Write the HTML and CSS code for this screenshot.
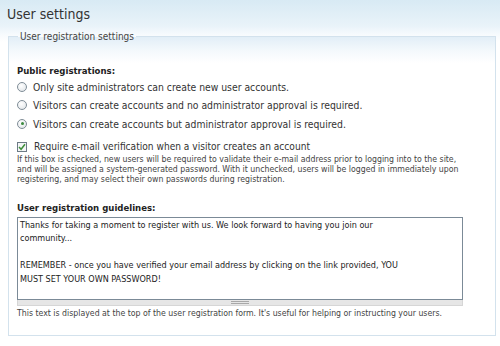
FILE: index.html
```html
<!DOCTYPE html>
<html>
<head>
<meta charset="utf-8">
<link rel="stylesheet" href="styles.css">
</head>
<body>
<div class="page">
  <h1 class="title">User settings</h1>
  <fieldset class="box">
    <legend class="legend">User registration settings</legend>
    <div class="item">
      <div class="label">Public registrations:</div>
      <div class="opt"><span class="radio"></span><span>Only site administrators can create new user accounts.</span></div>
      <div class="opt"><span class="radio"></span><span>Visitors can create accounts and no administrator approval is required.</span></div>
      <div class="opt"><span class="radio on"></span><span>Visitors can create accounts but administrator approval is required.</span></div>
    </div>
    <div class="item check">
      <div class="opt"><span class="checkbox"><svg width="8" height="8" viewBox="0 0 8 8"><path d="M1 4 L3.1 6.3 L7 1.3" fill="none" stroke="#3f8f3a" stroke-width="1.5"/></svg></span><span>Require e-mail verification when a visitor creates an account</span></div>
      <div class="desc">If this box is checked, new users will be required to validate their e-mail address prior to logging into to the site, and will be assigned a system-generated password. With it unchecked, users will be logged in immediately upon registering, and may select their own passwords during registration.</div>
    </div>
    <div class="item guide">
      <div class="label">User registration guidelines:</div>
      <div class="textarea">Thanks for taking a moment to register with us. We look forward to having you join our<br>community...<br><br>REMEMBER - once you have verified your email address by clicking on the link provided, YOU<br>MUST SET YOUR OWN PASSWORD!</div>
      <div class="grip"><span class="grip-bar"></span></div>
      <div class="desc help">This text is displayed at the top of the user registration form. It's useful for helping or instructing your users.</div>
    </div>
  </fieldset>
</div>
</body>
</html>
```

FILE: styles.css
```css
html, body {
  margin: 0;
  padding: 0;
}
body {
  background: linear-gradient(to bottom, #d8eaf4 0px, #e9f3f9 26px, #f6fafd 34px, #ffffff 42px, #ffffff 100%);
  font-family: "DejaVu Sans Condensed", "DejaVu Sans", sans-serif;
  color: #333;
  width: 500px;
  height: 346px;
  overflow: hidden;
}
.page {
  padding: 4px 0 0 7px;
}
.title {
  margin: 0;
  font-family: "DejaVu Sans Condensed", "DejaVu Sans", sans-serif;
  font-weight: normal;
  font-size: 14px;
  line-height: 20px;
  color: #333;
}
.box {
  margin: 7px 0 0 1px;
  width: 486px;
  box-sizing: border-box;
  height: 305px;
  border: 1px solid #d3e2ed;
  background: linear-gradient(to bottom, #e2eef7 0px, #f4f9fc 14px, #ffffff 26px, #ffffff 100%);
  padding: 22px 8px 0 8px;
}
.legend {
  font-size: 10px;
  color: #444;
  padding: 0 2px;
  margin-left: 1px;
}
.item {
  margin-bottom: 7px;
}
.label {
  font-weight: bold;
  font-size: 9.5px;
  color: #222;
  line-height: 14px;
}
.opt {
  display: flex;
  align-items: center;
  gap: 6px;
  font-size: 10.3px;
  line-height: 18.3px;
  color: #333;
}
.radio {
  width: 10px;
  height: 10px;
  box-sizing: border-box;
  border: 1px solid #7f8d97;
  border-radius: 50%;
  background: radial-gradient(circle at 40% 35%, #ffffff 0, #e2e6e9 85%);
  position: relative;
  flex: none;
}
.radio.on::after {
  content: "";
  position: absolute;
  left: 2.5px;
  top: 2.5px;
  width: 3px;
  height: 3px;
  border-radius: 50%;
  background: #3a8a3e;
}
.check .opt {
  line-height: 14px;
  font-size: 10.1px;
  gap: 7px;
}
.checkbox {
  width: 10px;
  height: 10px;
  box-sizing: border-box;
  border: 1px solid #6d7b86;
  background: #f4f6f7;
  display: flex;
  align-items: center;
  justify-content: center;
  flex: none;
}
.checkbox svg {
  display: block;
}
.desc {
  font-size: 8.7px;
  line-height: 10px;
  color: #444;
  width: 455px;
}
.guide {
  margin-top: 17px;
}
.textarea {
  margin-top: 2px;
  width: 446px;
  height: 83px;
  box-sizing: border-box;
  border: 1px solid #7b8a97;
  padding: 1px 2px;
  font-size: 9px;
  line-height: 13.5px;
  color: #222;
  background: #fff;
}
.grip {
  width: 446px;
  height: 6px;
  box-sizing: border-box;
  background: #e6e6e6;
  border: 1px solid #d6d6d6;
  border-top: none;
  display: flex;
  justify-content: center;
  align-items: center;
}
.grip-bar {
  width: 18px;
  height: 3px;
  border-top: 1px solid #a8a8a8;
  border-bottom: 1px solid #a8a8a8;
  box-sizing: border-box;
}
.help {
  margin-top: 2px;
  width: 470px;
}
```
